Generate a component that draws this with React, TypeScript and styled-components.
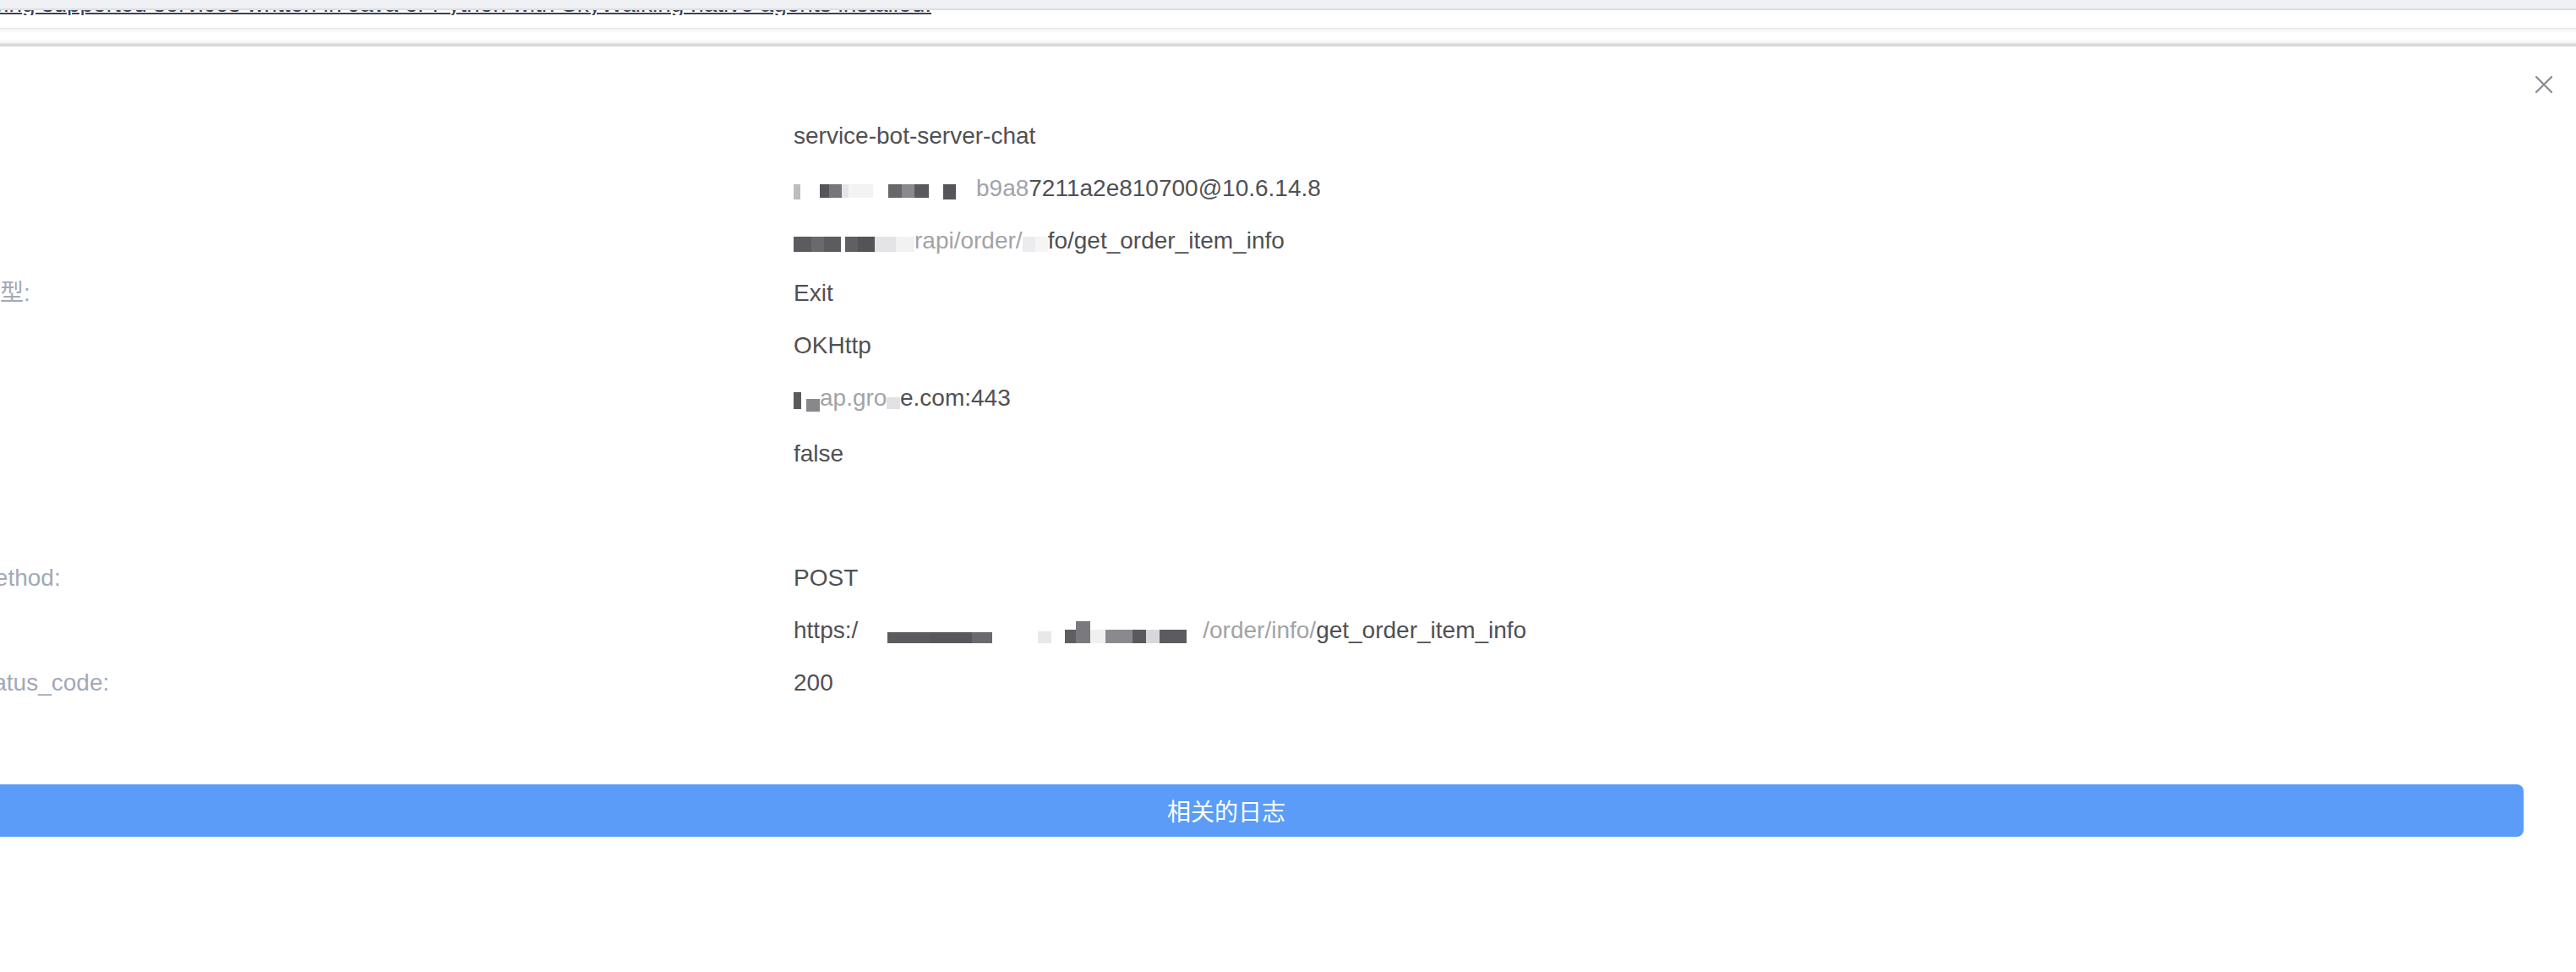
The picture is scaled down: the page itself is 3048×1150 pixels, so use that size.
import React from 'react';
import styled, { createGlobalStyle } from 'styled-components';

const GlobalStyle = createGlobalStyle`
  html, body {
    margin: 0;
    padding: 0;
    background: #ffffff;
    overflow: hidden;
  }
  body {
    font-family: "Liberation Sans", "Noto Sans CJK SC", sans-serif;
  }
  * { box-sizing: border-box; }
`;

const Page = styled.div`
  width: 3048px;
  height: 1150px;
  overflow: hidden;
  background: #ffffff;
`;

const TopStrip = styled.div`
  height: 12px;
  background: #f0f1f5;
  border-bottom: 2px solid #dcdde3;
`;

const BehindTextClip = styled.div`
  display: flex;
  justify-content: flex-end;
  align-items: flex-start;
  width: 1102px;
  height: 6px;
  overflow: hidden;
  margin-bottom: 15px;
`;

const BehindText = styled.span`
  flex-shrink: 0;
  white-space: nowrap;
  font-size: 28px;
  line-height: 28px;
  margin-top: -21px;
  color: #3e4251;
  text-decoration: underline;
  text-decoration-thickness: 2px;
  text-underline-offset: 1px;
`;

const ScrollTrack = styled.div`
  height: 22px;
  background: linear-gradient(
    to bottom,
    #e3e3e5 0px,
    #f5f5f6 2px,
    #ffffff 6px,
    #ffffff 13px,
    #f3f3f4 18px,
    #d8d8dd 19px,
    #d8d8dd 22px
  );
`;

const Drawer = styled.section`
  position: relative;
  margin-left: -84px;
  width: 3132px;
  padding: 85px 62px 0 0;
`;

const CloseButton = styled.button`
  position: absolute;
  top: 35px;
  right: 28px;
  width: 20px;
  height: 20px;
  padding: 0;
  border: 0;
  background: none;
  display: flex;
  cursor: pointer;
`;

const Row = styled.div`
  display: grid;
  grid-template-columns: 1023px 1fr;
  font-size: 28px;
  line-height: 42px;
  margin-bottom: 20px;
`;

const Label = styled.span`
  color: #a3a9b6;
  white-space: nowrap;
`;

const Value = styled.span`
  color: #4f5055;
  white-space: nowrap;
`;

const Faint = styled.span`
  color: #a2a3a8;
`;

const SectionTitle = styled.h5`
  margin: 25px 0 38px;
  font-size: 28px;
  line-height: 42px;
  font-weight: normal;
  color: #4f5055;
  white-space: nowrap;
`;

const LogButton = styled.button`
  display: block;
  width: 100%;
  height: 62px;
  margin-top: 99px;
  border: 0;
  border-radius: 8px;
  background: #5a9cf8;
  color: #ffffff;
  font-size: 28px;
  font-family: "Noto Sans CJK SC", "Liberation Sans", sans-serif;
  cursor: pointer;
`;

const MosaicWrap = styled.span`
  display: inline-flex;
  height: 26px;
  vertical-align: -4px;
  align-items: center;
`;

const Tile = styled.span<{ $w: number; $c: string; $h: number; $a: string }>`
  flex-shrink: 0;
  width: ${(p) => p.$w}px;
  height: ${(p) => p.$h}px;
  background: ${(p) => p.$c};
  align-self: ${(p) => p.$a};
`;

type Block = { w: number; c: string; h?: number; a?: 'top' | 'bottom' | 'center' };
type Part = string | { mosaic: Block[] } | { faint: string };

const alignMap = { top: 'flex-start', bottom: 'flex-end', center: 'center' };

const Mosaic: React.FC<{ blocks: Block[] }> = ({ blocks }) => (
  <MosaicWrap>
    {blocks.map((b, i) => (
      <Tile key={i} $w={b.w} $c={b.c} $h={b.h ?? 22} $a={alignMap[b.a ?? 'center']} />
    ))}
  </MosaicWrap>
);

const W = '#ffffff';

const rows1: { label: string; parts: Part[] }[] = [
  { label: '服务:', parts: ['service-bot-server-chat'] },
  {
    label: '实例:',
    parts: [
      {
        mosaic: [
          { w: 8, c: '#bdbdbf', h: 18, a: 'top' },
          { w: 23, c: W },
          { w: 11, c: '#56565a', h: 16, a: 'top' },
          { w: 15, c: '#77777b', h: 16, a: 'top' },
          { w: 8, c: '#e6e6e8', h: 16, a: 'top' },
          { w: 29, c: '#f3f3f4', h: 16, a: 'top' },
          { w: 18, c: W },
          { w: 16, c: '#68686c', h: 16, a: 'top' },
          { w: 15, c: '#8a8a8e', h: 16, a: 'top' },
          { w: 17, c: '#5a5a5e', h: 16, a: 'top' },
          { w: 17, c: W },
          { w: 15, c: '#55555a', h: 18, a: 'top' },
          { w: 24, c: W },
        ],
      },
      { faint: 'b9a8' },
      '7211a2e810700@10.6.14.8',
    ],
  },
  {
    label: '端点:',
    parts: [
      {
        mosaic: [
          { w: 21, c: '#5c5c60', h: 18, a: 'bottom' },
          { w: 15, c: '#6a6a6e', h: 18, a: 'bottom' },
          { w: 20, c: '#5c5c60', h: 18, a: 'bottom' },
          { w: 5, c: W },
          { w: 15, c: '#606064', h: 18, a: 'bottom' },
          { w: 20, c: '#545458', h: 18, a: 'bottom' },
          { w: 25, c: '#e4e4e6', h: 18, a: 'bottom' },
          { w: 22, c: '#f2f2f3', h: 18, a: 'bottom' },
        ],
      },
      { faint: 'rapi/order/' },
      {
        mosaic: [
          { w: 15, c: '#ececee', h: 18, a: 'bottom' },
          { w: 15, c: '#f5f5f6', h: 18, a: 'bottom' },
        ],
      },
      'fo/get_order_item_info',
    ],
  },
  { label: '跨度类型:', parts: ['Exit'] },
  { label: '组件:', parts: ['OKHttp'] },
  {
    label: 'Peer:',
    parts: [
      {
        mosaic: [
          { w: 9, c: '#5b5b5f', h: 20, a: 'center' },
          { w: 6, c: W },
          { w: 16, c: '#88888c', h: 15, a: 'bottom' },
        ],
      },
      { faint: 'ap.gro' },
      { mosaic: [{ w: 15.6, c: '#e2e2e4', h: 14, a: 'top' }] },
      'e.com:443',
    ],
  },
  { label: '失败:', parts: ['false'] },
];

const rows2: { label: string; parts: Part[] }[] = [
  { label: 'http.method:', parts: ['POST'] },
  {
    label: 'url:',
    parts: [
      'https:/',
      {
        mosaic: [
          { w: 35, c: W },
          { w: 50, c: '#5c5c60', h: 13, a: 'bottom' },
          { w: 50, c: '#58585c', h: 13, a: 'bottom' },
          { w: 24, c: '#6a6a6e', h: 13, a: 'bottom' },
          { w: 54, c: W },
          { w: 16, c: '#e8e8ea', h: 14, a: 'bottom' },
          { w: 16, c: W },
          { w: 13, c: '#5f5f63', h: 16, a: 'bottom' },
          { w: 17, c: '#7a7a7e', h: 26, a: 'bottom' },
          { w: 18, c: '#f0f0f1', h: 16, a: 'bottom' },
          { w: 32, c: '#8a8a8e', h: 16, a: 'bottom' },
          { w: 16, c: '#5a5a5e', h: 16, a: 'bottom' },
          { w: 16, c: '#d8d8da', h: 16, a: 'bottom' },
          { w: 32, c: '#5c5c60', h: 16, a: 'bottom' },
          { w: 19, c: W },
        ],
      },
      { faint: '/order/info/' },
      'get_order_item_info',
    ],
  },
  { label: 'http.status_code:', parts: ['200'] },
];

const renderParts = (parts: Part[]) =>
  parts.map((p, i) => {
    if (typeof p === 'string') return <React.Fragment key={i}>{p}</React.Fragment>;
    if ('mosaic' in p) return <Mosaic key={i} blocks={p.mosaic} />;
    return <Faint key={i}>{p.faint}</Faint>;
  });

const DetailRow: React.FC<{ label: string; parts: Part[] }> = ({ label, parts }) => (
  <Row>
    <Label>{label}</Label>
    <Value>{renderParts(parts)}</Value>
  </Row>
);

const CloseIcon = () => (
  <svg width="20" height="20" viewBox="0 0 20 20" fill="none">
    <path d="M1 1L19 19M19 1L1 19" stroke="#8d8f96" strokeWidth="2.4" strokeLinecap="round" />
  </svg>
);

export default function App() {
  return (
    <>
      <GlobalStyle />
      <Page>
        <TopStrip />
        <BehindTextClip>
          <BehindText>
            Showing supported services written in Java or Python with SkyWalking native agents installed.
          </BehindText>
        </BehindTextClip>
        <ScrollTrack />
        <Drawer>
          <CloseButton aria-label="close">
            <CloseIcon />
          </CloseButton>
          {rows1.map((r, i) => (
            <DetailRow key={i} label={r.label} parts={r.parts} />
          ))}
          <SectionTitle>标签:</SectionTitle>
          {rows2.map((r, i) => (
            <DetailRow key={i} label={r.label} parts={r.parts} />
          ))}
          <LogButton>相关的日志</LogButton>
        </Drawer>
      </Page>
    </>
  );
}
